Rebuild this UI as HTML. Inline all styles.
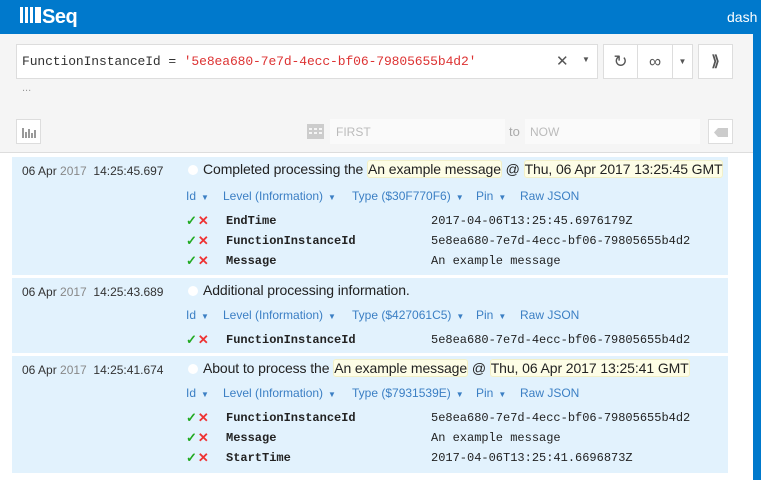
<!DOCTYPE html>
<html><head><style>
body{margin:0;width:761px;height:480px;overflow:hidden;background:#fff;font-family:"Liberation Sans",sans-serif;position:relative}
.a{position:absolute}
.mono{font-family:"Liberation Mono",monospace}
.btn{position:absolute;background:#fff;border:1px solid #ddd;box-sizing:border-box;color:#555;text-align:center}
.row{position:absolute;left:12px;width:716px;background:#e2f2fd}
.dt{position:absolute;left:10px;top:7px;font-size:12px;color:#333}
.dt span{color:#888}
.dot{position:absolute;left:176px;top:8px;width:10px;height:10px;border-radius:50%;background:#fff}
.msg{position:absolute;left:191px;top:4px;font-size:14px;color:#222;white-space:nowrap;letter-spacing:-0.1px}
.hl{background:#fdfde6;border:1px solid #f2f0c8;border-radius:3px;padding:0}
.lk{position:absolute;font-size:12px;color:#3b7fc4;white-space:nowrap}
.lk i{font-style:normal;font-size:8px;margin-left:5px}
.pr{position:absolute;left:174px;font-size:12px;height:20px;line-height:20px;white-space:nowrap}
.pr .c{color:#2a2;font-weight:bold;font-size:13px}
.pr .x{color:#e33;font-weight:bold;font-size:13px;margin-left:1px}
.pr .n{position:absolute;left:40px;font-family:"Liberation Mono",monospace;font-weight:bold;color:#222}
.pr .v{position:absolute;left:245px;font-family:"Liberation Mono",monospace;color:#222}
</style></head><body>
<div class="a" style="left:0;top:0;width:761px;height:34px;background:#0079cc"></div>
<div class="a" style="left:20px;top:6px;color:#fff;font-weight:bold;font-size:20px;letter-spacing:-0.5px">
<span style="display:inline-block;width:3px;height:16px;background:#fff;margin-right:2px"></span><span style="display:inline-block;width:3px;height:16px;background:#fff;margin-right:2px"></span><span style="display:inline-block;width:3px;height:16px;background:#fff;margin-right:2px"></span><span style="display:inline-block;width:6px;height:16px;background:#fff;margin-right:1px"></span>Seq</div>
<div class="a" style="left:727px;top:9px;color:#fff;font-size:14px">dash</div>
<div class="a" style="left:0;top:34px;width:753px;height:118px;background:#f5f5f5;border-bottom:1px solid #ddd"></div>
<div class="a" style="left:753px;top:34px;width:8px;height:446px;background:#0079cc"></div>
<div class="btn" style="left:16px;top:44px;width:582px;height:35px"></div>
<div class="a mono" style="left:22px;top:54px;font-size:13px;letter-spacing:-0.1px;color:#333;white-space:nowrap">FunctionInstanceId = <span style="color:#d33">'5e8ea680-7e7d-4ecc-bf06-79805655b4d2'</span></div>
<div class="a" style="left:556px;top:52px;font-size:15px;color:#555">✕</div>
<div class="a" style="left:582px;top:55px;font-size:8px;color:#555">▼</div>
<div class="btn" style="left:603px;top:44px;width:35px;height:35px;font-size:17px;line-height:33px">↻</div>
<div class="btn" style="left:637px;top:44px;width:36px;height:35px;font-size:17px;line-height:33px">∞</div>
<div class="btn" style="left:672px;top:44px;width:21px;height:35px;font-size:8px;line-height:33px">▼</div>
<div class="btn" style="left:698px;top:44px;width:35px;height:35px;font-size:15px;line-height:33px;font-weight:bold">⟫</div>
<div class="a" style="left:22px;top:82px;font-size:11px;color:#999">...</div>
<div class="btn" style="left:16px;top:119px;width:25px;height:25px"><svg width="14" height="12" style="margin-top:6px" viewBox="0 0 14 12"><g fill="#999"><rect x="0" y="2" width="2" height="10"/><rect x="3" y="6" width="2" height="6"/><rect x="6" y="3" width="2" height="9"/><rect x="9" y="7" width="2" height="5"/><rect x="12" y="4" width="2" height="8"/></g></svg></div>
<svg class="a" style="left:307px;top:122px" width="17" height="17" viewBox="0 0 17 17"><rect x="0" y="2" width="17" height="15" fill="#ccc"/><g fill="#f5f5f5"><rect x="2" y="6" width="3" height="2"/><rect x="7" y="6" width="3" height="2"/><rect x="12" y="6" width="3" height="2"/><rect x="2" y="10" width="3" height="2"/><rect x="7" y="10" width="3" height="2"/><rect x="12" y="10" width="3" height="2"/></g></svg>
<div class="a" style="left:330px;top:119px;width:175px;height:25px;background:#fafafa"></div>
<div class="a" style="left:336px;top:125px;font-size:12px;color:#bbb">FIRST</div>
<div class="a" style="left:509px;top:124px;font-size:13px;color:#aaa">to</div>
<div class="a" style="left:525px;top:119px;width:175px;height:25px;background:#fafafa"></div>
<div class="a" style="left:530px;top:125px;font-size:12px;color:#bbb">NOW</div>
<div class="btn" style="left:708px;top:119px;width:25px;height:25px"><svg width="14" height="9" style="margin-top:8px" viewBox="0 0 14 9"><path d="M4 0H14V9H4L0 4.5Z" fill="#ccc"/></svg></div>

<div class="row" style="top:157px;height:118px">
<div class="dt">06 Apr <span>2017</span>&nbsp; 14:25:45.697</div><div class="dot"></div>
<div class="msg">Completed processing the <span class="hl">An example message</span> @ <span class="hl">Thu, 06 Apr 2017 13:25:45 GMT</span></div>
<div class="lk" style="left:174px;top:32px">Id<i>▼</i></div><div class="lk" style="left:211px;top:32px">Level (Information)<i>▼</i></div><div class="lk" style="left:340px;top:32px">Type ($30F770F6)<i>▼</i></div><div class="lk" style="left:464px;top:32px">Pin<i>▼</i></div><div class="lk" style="left:508px;top:32px">Raw JSON</div>
<div class="pr" style="top:54px"><span class="c">✓</span><span class="x">✕</span><span class="n">EndTime</span><span class="v">2017-04-06T13:25:45.6976179Z</span></div>
<div class="pr" style="top:74px"><span class="c">✓</span><span class="x">✕</span><span class="n">FunctionInstanceId</span><span class="v">5e8ea680-7e7d-4ecc-bf06-79805655b4d2</span></div>
<div class="pr" style="top:94px"><span class="c">✓</span><span class="x">✕</span><span class="n">Message</span><span class="v">An example message</span></div>
</div>

<div class="row" style="top:278px;height:75px">
<div class="dt">06 Apr <span>2017</span>&nbsp; 14:25:43.689</div><div class="dot"></div>
<div class="msg">Additional processing information.</div>
<div class="lk" style="left:174px;top:30px">Id<i>▼</i></div><div class="lk" style="left:211px;top:30px">Level (Information)<i>▼</i></div><div class="lk" style="left:340px;top:30px">Type ($427061C5)<i>▼</i></div><div class="lk" style="left:464px;top:30px">Pin<i>▼</i></div><div class="lk" style="left:508px;top:30px">Raw JSON</div>
<div class="pr" style="top:52px"><span class="c">✓</span><span class="x">✕</span><span class="n">FunctionInstanceId</span><span class="v">5e8ea680-7e7d-4ecc-bf06-79805655b4d2</span></div>
</div>

<div class="row" style="top:356px;height:117px">
<div class="dt">06 Apr <span>2017</span>&nbsp; 14:25:41.674</div><div class="dot"></div>
<div class="msg">About to process the <span class="hl">An example message</span> @ <span class="hl">Thu, 06 Apr 2017 13:25:41 GMT</span></div>
<div class="lk" style="left:174px;top:30px">Id<i>▼</i></div><div class="lk" style="left:211px;top:30px">Level (Information)<i>▼</i></div><div class="lk" style="left:340px;top:30px">Type ($7931539E)<i>▼</i></div><div class="lk" style="left:464px;top:30px">Pin<i>▼</i></div><div class="lk" style="left:508px;top:30px">Raw JSON</div>
<div class="pr" style="top:52px"><span class="c">✓</span><span class="x">✕</span><span class="n">FunctionInstanceId</span><span class="v">5e8ea680-7e7d-4ecc-bf06-79805655b4d2</span></div>
<div class="pr" style="top:72px"><span class="c">✓</span><span class="x">✕</span><span class="n">Message</span><span class="v">An example message</span></div>
<div class="pr" style="top:92px"><span class="c">✓</span><span class="x">✕</span><span class="n">StartTime</span><span class="v">2017-04-06T13:25:41.6696873Z</span></div>
</div>
</body></html>
